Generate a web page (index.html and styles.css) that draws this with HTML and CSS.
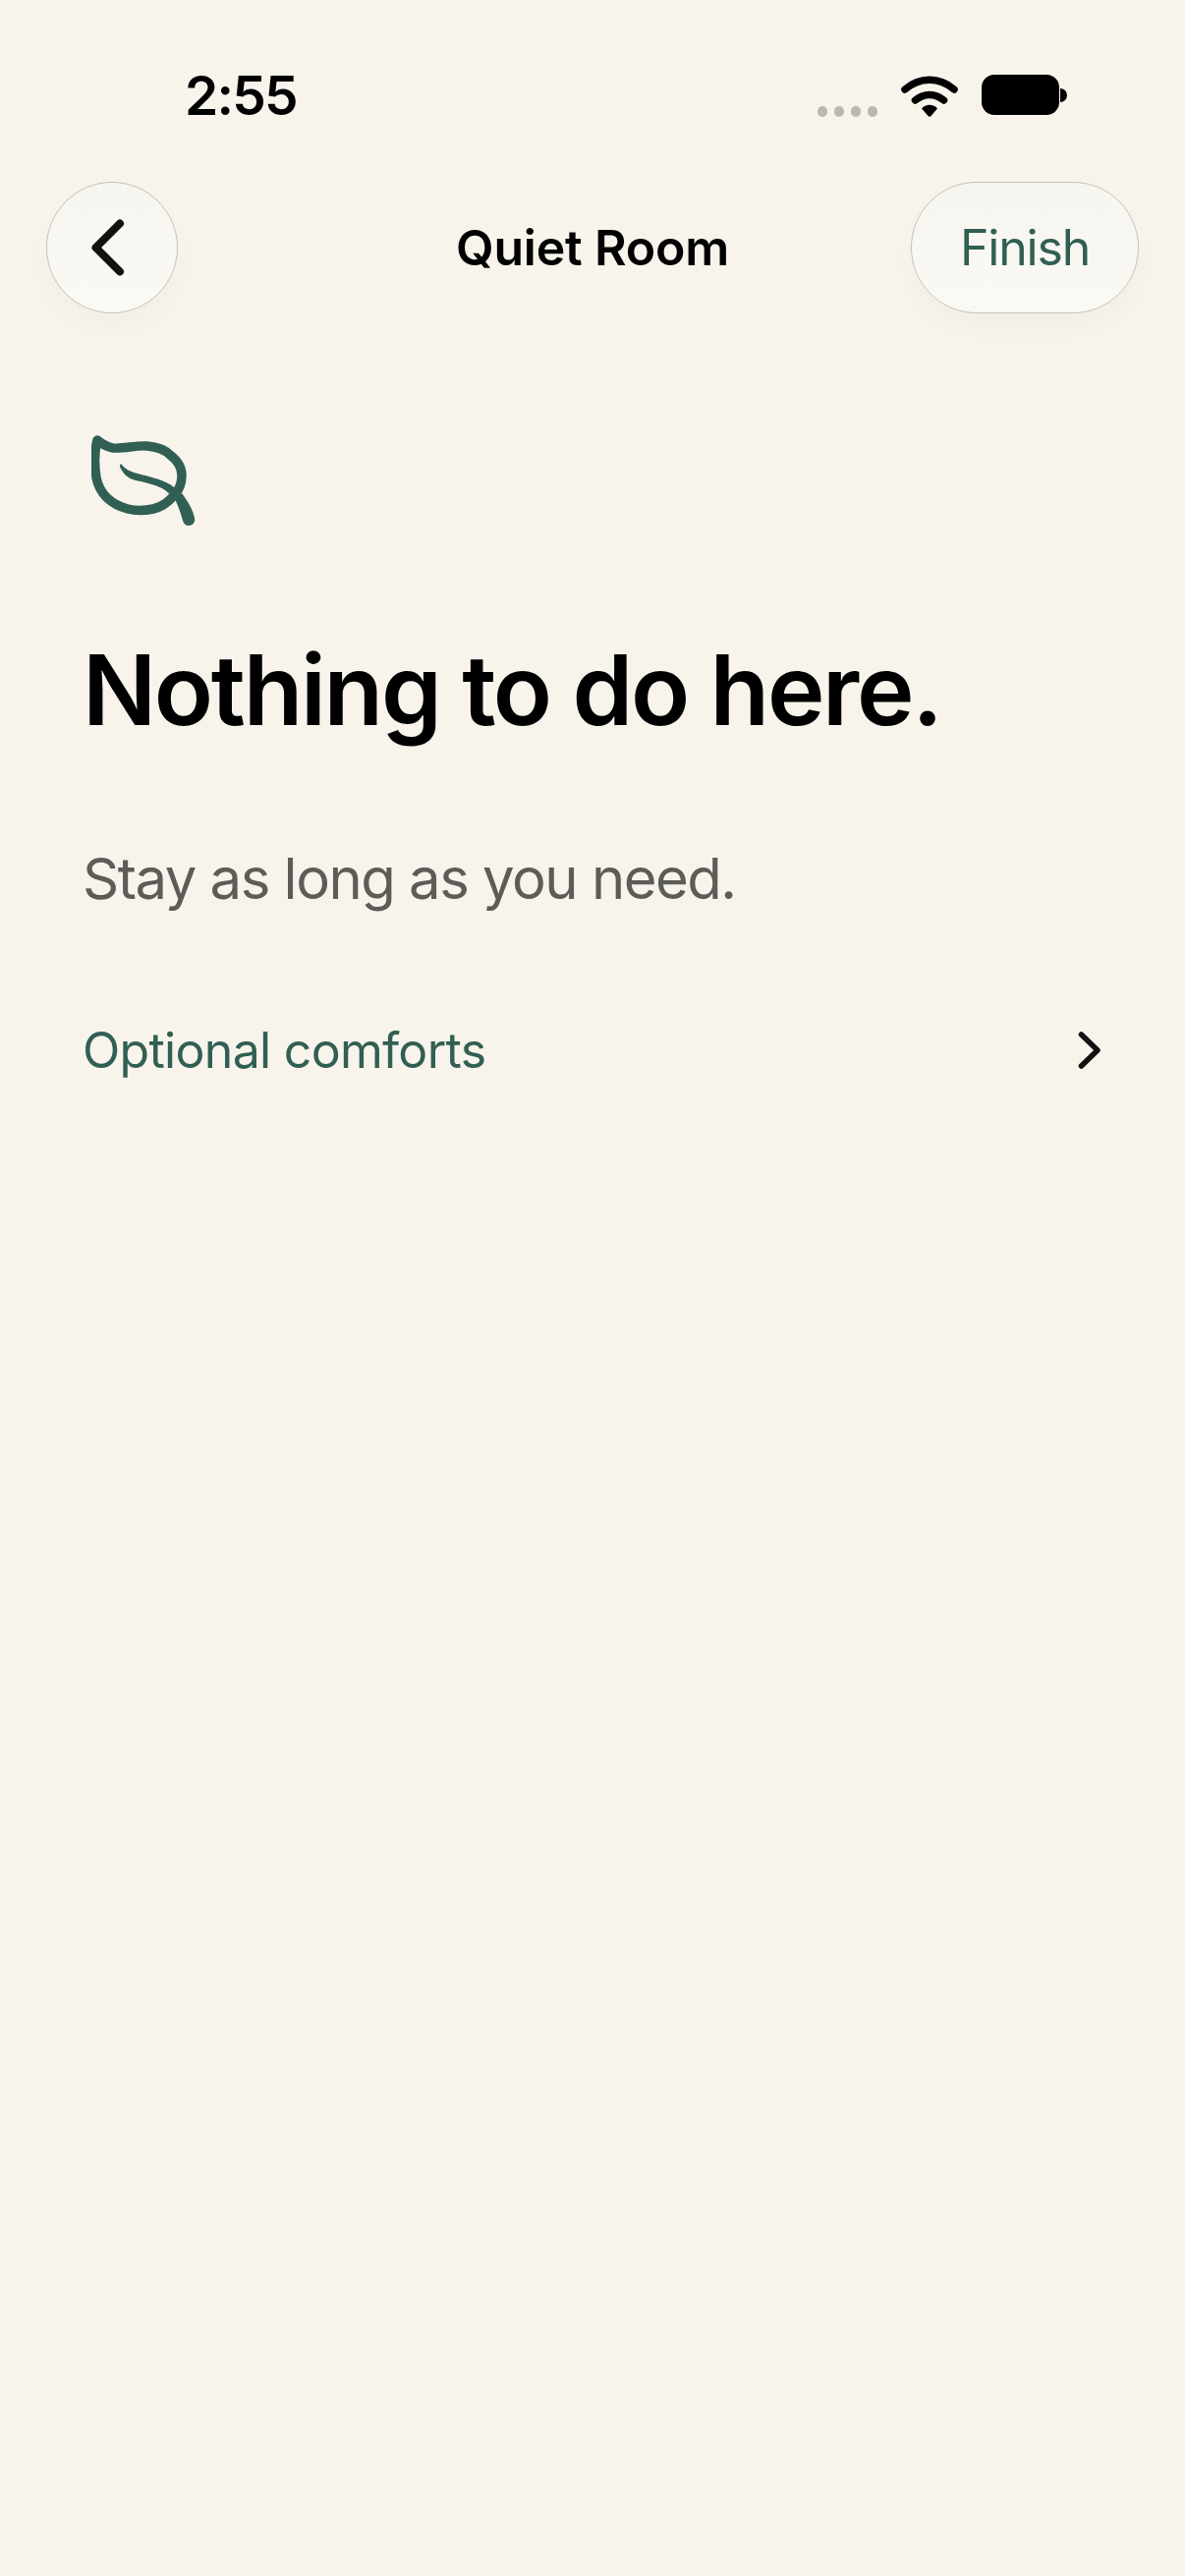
FILE: index.html
```html
<!DOCTYPE html>
<html lang="en">
<head>
  <meta charset="UTF-8" />
  <meta name="viewport" content="width=device-width, initial-scale=1.0"/>
  <title>Quiet Room</title>
  <link rel="stylesheet" href="styles.css">
</head>
<body>
  <div class="screen">
    <div class="status-bar">
      <span class="time">2:55</span>
      <div class="status-icons">
        <div class="signal">
          <span class="dot"></span>
          <span class="dot"></span>
          <span class="dot"></span>
          <span class="dot"></span>
        </div>
        <svg class="wifi" viewBox="0 0 58 43">
          <path d="M4 15C19 2 39 2 54 15" fill="none" stroke="#000" stroke-width="7.5" stroke-linecap="round"/>
          <path d="M14.500 26C23 18.500 35 18.500 43.500 26" fill="none" stroke="#000" stroke-width="7.500" stroke-linecap="round"/>
          <path d="M21 34.500C25 29.500 33 29.500 37 34.500L30.500 42C29.700 43 28.300 43 27.500 42Z" fill="#000"/>
        </svg>
        <div class="battery">
          <div class="battery-body"></div>
          <div class="battery-cap"></div>
        </div>
      </div>
    </div>

    <div class="nav">
      <div class="nav-left">
        <button class="glass-btn back-btn">
          <svg class="back-icon" viewBox="0 0 34 58">
            <path d="M29 4.500L4.500 29L29 53.500" fill="none" stroke="#111" stroke-width="8" stroke-linecap="round" stroke-linejoin="round"/>
          </svg>
        </button>
      </div>
      <div class="nav-title">Quiet Room</div>
      <div class="nav-right">
        <button class="glass-btn finish-btn">Finish</button>
      </div>
    </div>

    <div class="content">
      <svg class="leaf" viewBox="33 22 106 94">
        <path d="M39 28C44 32 49 35 55 36C66 37 78 33 90 34C101 35 108 38 113 43C121 49 125 56 125 64C125 71 123 77 119 82C112 91 105 96 96 98C87 100 78 100 70 98C54 94 41 83 38 66C36 54 36 40 39 28Z" fill="none" stroke="#315f53" stroke-width="9.500" stroke-linejoin="round"/>
        <path d="M63 52C67 57 72 60 80 62C92 65 104 68 113 73C118 76 122 80 125 85L117 87C113 83 110 80 105 77C96 73 88 71 78 69C70 67 65 62 62 55Q62 52 63 52Z" fill="#315f53"/>
        <path d="M117 86L125 82C131 90 136 98 138 107C139 112 136 115 132 115C129 115 127 113 126 110C124 102 121 94 117 86Z" fill="#315f53"/>
      </svg>

      <h1>Nothing to do here.</h1>
      <p class="sub">Stay as long as you need.</p>

      <div class="comforts">
        <span>Optional comforts</span>
        <svg class="row-icon" viewBox="0 0 24 38">
          <path d="M3.500 3L20 19L3.500 35" fill="none" stroke="#111" stroke-width="5.500" stroke-linecap="round" stroke-linejoin="round"/>
        </svg>
      </div>
    </div>
  </div>
</body>
</html>
```

FILE: styles.css
```css
body {
  margin: 0;
  background-color: #f8f4ec;
  font-family: Inter, "Liberation Sans", sans-serif;
  color: #000;
}
.screen {
  height: 2622px;
  overflow: hidden;
}
.status-bar {
  display: flex;
  justify-content: space-between;
  padding: 67px 120px 0 188px;
  box-sizing: border-box;
  height: 185px;
}
.time {
  font-size: 55px;
  font-weight: 600;
  line-height: 60px;
  letter-spacing: -1.800px;
}
.status-icons {
  display: flex;
  align-items: flex-start;
  padding-top: 9px;
}
.signal {
  display: flex;
  gap: 6.500px;
  margin-top: 32px;
}
.dot {
  width: 10.500px;
  height: 10.500px;
  border-radius: 50%;
  background: #b9b9b1;
}
.wifi {
  width: 58px;
  height: 43px;
  margin-left: 24px;
}
.battery {
  display: flex;
  align-items: center;
  margin-left: 24px;
}
.battery-body {
  width: 79px;
  height: 41px;
  border-radius: 13px;
  background: #000;
}
.battery-cap {
  width: 7px;
  height: 14px;
  margin-left: 1px;
  border-radius: 0 7px 7px 0;
  background: #000;
}
.nav {
  display: grid;
  grid-template-columns: 1fr auto 1fr;
  align-items: center;
  padding: 0 47px;
}
.nav-right {
  display: flex;
  justify-content: flex-end;
}
.nav-title {
  font-size: 50px;
  font-weight: 600;
  letter-spacing: -0.200px;
}
.glass-btn {
  display: flex;
  align-items: center;
  justify-content: center;
  height: 134px;
  padding: 0;
  border: 1.500px solid #c4c2ba;
  border-radius: 67px;
  background: linear-gradient(180deg, #f7f5ef, #faf9f3);
  box-shadow: 0 14px 26px rgba(60,60,40,0.025);
  font-family: inherit;
}
.back-btn {
  width: 134px;
}
.back-icon {
  width: 34px;
  height: 58px;
  margin-left: -9px;
}
.finish-btn {
  width: 232px;
  font-size: 50px;
  letter-spacing: -1.200px;
  color: #315f53;
}
.content {
  padding: 123px 85px 0 84px;
}
.leaf {
  display: block;
  width: 106px;
  height: 94px;
  margin-left: 9px;
}
h1 {
  margin: 106px 0 0 0;
  font-size: 99px;
  font-weight: 600;
  line-height: 120px;
  letter-spacing: -2.300px;
}
.sub {
  margin: 97px 0 0 0;
  font-size: 58px;
  line-height: 70px;
  letter-spacing: -1.500px;
  color: #5c5c58;
}
.comforts {
  display: flex;
  justify-content: space-between;
  align-items: center;
  margin-top: 110px;
  font-size: 50px;
  letter-spacing: -0.700px;
  color: #315f53;
}
.row-icon {
  width: 24px;
  height: 38px;
}
```
